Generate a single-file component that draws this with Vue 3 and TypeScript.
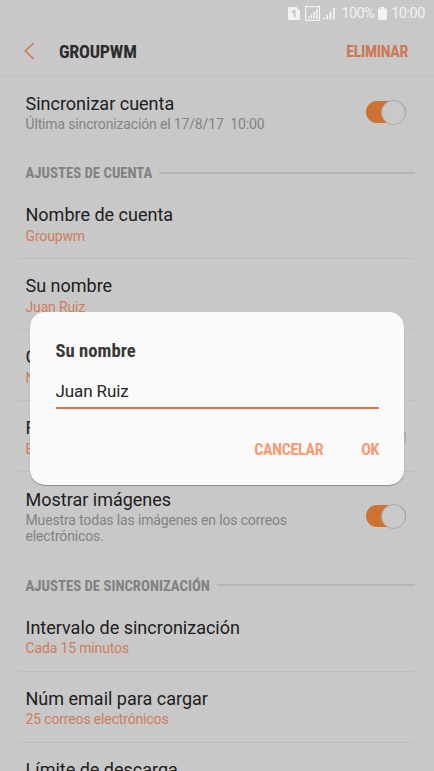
<script setup lang="ts">
import { ref } from 'vue'

interface Setting {
  title: string
  value: string
  toggle?: boolean
}

const account: Setting[] = [
  { title: 'Nombre de cuenta', value: 'Groupwm' },
  { title: 'Su nombre', value: 'Juan Ruiz' },
  { title: 'C', value: 'N' },
  { title: 'F', value: 'E', toggle: true },
]
const sync: Setting[] = [
  { title: 'Intervalo de sincronización', value: 'Cada 15 minutos' },
  { title: 'Núm email para cargar', value: '25 correos electrónicos' },
  { title: 'Límite de descarga', value: '' },
]
const name = ref('Juan Ruiz')
</script>

<template>
  <div class="screen">
    <header class="status">
      <svg class="sim" width="12" height="13" viewBox="0 0 12 13">
        <path fill="#f2f2f2" fill-rule="evenodd" d="M1 0h7.500L12 3.500V12l-1 1H1L0 12V1zM3.600 4.500l2.400-1.700h1.600v7.400H5.800V5.200L3.600 6.200z" />
      </svg>
      <svg class="signals" width="32" height="15" viewBox="0 0 32 15">
        <rect x=".6" y=".6" width="13.800" height="13.800" fill="none" stroke="#f2f2f2" stroke-width="1.200" />
        <path fill="#f2f2f2" d="M3 10.500h1.500v2H3zM5.700 8.500h1.500v4H5.700zM8.400 6h1.500v6.500H8.400zM11.100 3h1.500v9.500h-1.500zM18 11.500h1.800v2H18zM21.200 9h1.800v4.500h-1.800zM24.500 5.500h1.800v8h-1.800zM28 2h1.800v11.500H28z" />
      </svg>
      <span class="percent">100%</span>
      <svg class="battery" width="9" height="13" viewBox="0 0 9 13">
        <path fill="#f2f2f2" d="M2.500 0h4v1.500H8q1 0 1 1V12q0 1-1 1H1q-1 0-1-1V2.500q0-1 1-1h1.500z" />
      </svg>
      <span class="clock">10:00</span>
    </header>

    <nav class="bar">
      <svg class="back" width="11" height="18" viewBox="0 0 11 18">
        <path d="M9.500 1.200 1.300 9l8.200 7.800" fill="none" stroke="#d07a58" stroke-width="1.600" />
      </svg>
      <h1 class="cond">GROUPWM</h1>
      <button class="cond delete">ELIMINAR</button>
    </nav>

    <main>
      <section class="row first">
        <div class="text">
          <div class="title">Sincronizar cuenta</div>
          <div class="sub">Última sincronización el 17/8/17&nbsp; 10:00</div>
        </div>
        <span class="switch"></span>
      </section>

      <h2 class="section"><span class="cond">AJUSTES DE CUENTA</span></h2>
      <section v-for="s in account" :key="s.title" class="row account">
        <div class="text">
          <div class="title">{{ s.title }}</div>
          <div class="sub accent">{{ s.value }}</div>
        </div>
        <span v-if="s.toggle" class="switch"></span>
      </section>
      <section class="row images">
        <div class="text">
          <div class="title">Mostrar imágenes</div>
          <div class="sub">Muestra todas las imágenes en los correos electrónicos.</div>
        </div>
        <span class="switch"></span>
      </section>

      <h2 class="section second"><span class="cond">AJUSTES DE SINCRONIZACIÓN</span></h2>
      <section v-for="s in sync" :key="s.title" class="row">
        <div class="text">
          <div class="title">{{ s.title }}</div>
          <div class="sub accent">{{ s.value }}</div>
        </div>
      </section>
    </main>

    <div class="dialog" role="dialog">
      <h3 class="cond">Su nombre</h3>
      <input v-model="name" class="field" type="text" />
      <div class="actions">
        <button class="cond">CANCELAR</button>
        <button class="cond">OK</button>
      </div>
    </div>
  </div>
</template>

<style>
body {
  background: #c8c8c8;
}
</style>

<style scoped>
.screen {
  position: relative;
  box-sizing: border-box;
  width: 434px;
  height: 771px;
  overflow: hidden;
  background: #c8c8c8;
  font-family: Roboto, sans-serif;
  color: #202020;
}
.screen * {
  box-sizing: border-box;
}
h1, h2, h3 {
  margin: 0;
}
button {
  border: 0;
  padding: 0;
  background: none;
}
.cond {
  font-family: "Roboto Condensed", Roboto, sans-serif;
  font-stretch: 75%;
  font-weight: 700;
  white-space: nowrap;
}
.status {
  display: flex;
  align-items: center;
  justify-content: flex-end;
  height: 26px;
  padding-right: 9px;
  color: #f2f2f2;
  font-size: 14.500px;
  letter-spacing: -0.450px;
}
.signals {
  margin-left: 5px;
}
.percent {
  margin-left: 4px;
  letter-spacing: -0.600px;
}
.battery {
  margin: 0 4px;
}
.bar {
  display: flex;
  align-items: center;
  height: 50px;
  padding: 1px 26px 0 24px;
  border-bottom: 1px solid #c0c0c0;
}
.bar h1 {
  margin-left: 24px;
  font-size: 18px;
  letter-spacing: -0.200px;
  color: #2c2c2c;
}
.delete {
  margin-left: auto;
  font-size: 16px;
  letter-spacing: -0.350px;
  color: #cd7853;
}
.row {
  display: flex;
  justify-content: space-between;
  height: 71px;
  margin: 0 19px;
  padding: 15px 9px 0 6.500px;
  border-bottom: 1px solid #bebebe;
}
.row.first {
  height: 82px;
  border: 0;
}
.row.first .text {
  padding-top: 1px;
}
.account .sub {
  margin-top: 1px;
}
.row.images {
  height: 99px;
  padding-top: 16px;
  border: 0;
}
.images .switch {
  margin-top: 17px;
}
.title {
  font-size: 18px;
  line-height: 24px;
  white-space: nowrap;
}
.sub {
  width: 290px;
  font-size: 14px;
  letter-spacing: -0.150px;
  line-height: 16px;
  color: #838383;
}
.accent {
  color: #ce7d5b;
}
.switch {
  display: flex;
  flex: none;
  justify-content: flex-end;
  align-items: center;
  width: 40px;
  height: 22px;
  margin-top: 10px;
  border-radius: 11px;
  background: #cf7131;
}
.switch::after {
  content: "";
  width: 23px;
  height: 23px;
  flex: none;
  border: 1px solid #a9a9a9;
  border-radius: 50%;
  background: #c9c9c9;
}
.section {
  display: flex;
  align-items: center;
  height: 30px;
  margin: 0 19px;
  padding-left: 6.500px;
  gap: 7px;
  font-size: 14.750px;
  color: #818181;
}
.section::after {
  content: "";
  flex: 1;
  height: 2px;
  background: #b5b5b5;
}
.section.second::after {
  margin-bottom: 2px;
}
.dialog {
  position: absolute;
  left: 30px;
  top: 312px;
  width: 374px;
  height: 173px;
  padding: 27px 25px 0 25.500px;
  border-radius: 15px;
  background: #fafafa;
  box-shadow: 0 1px 1px rgba(0, 0, 0, 0.300);
}
.dialog h3 {
  font-size: 18.700px;
  line-height: 24px;
  color: #383838;
}
.field {
  display: block;
  width: 323px;
  height: 34px;
  margin-top: 12px;
  padding: 0 0 1px;
  border: 0;
  border-bottom: 2px solid #dc7650;
  outline: 0;
  background: none;
  font: 17px Roboto, sans-serif;
  letter-spacing: -0.100px;
  color: #252525;
}
.actions {
  display: flex;
  justify-content: flex-end;
  gap: 38px;
  margin-top: 31px;
}
.actions button {
  font-size: 16px;
  letter-spacing: -0.350px;
  line-height: 20px;
  color: #f79b73;
}
</style>
